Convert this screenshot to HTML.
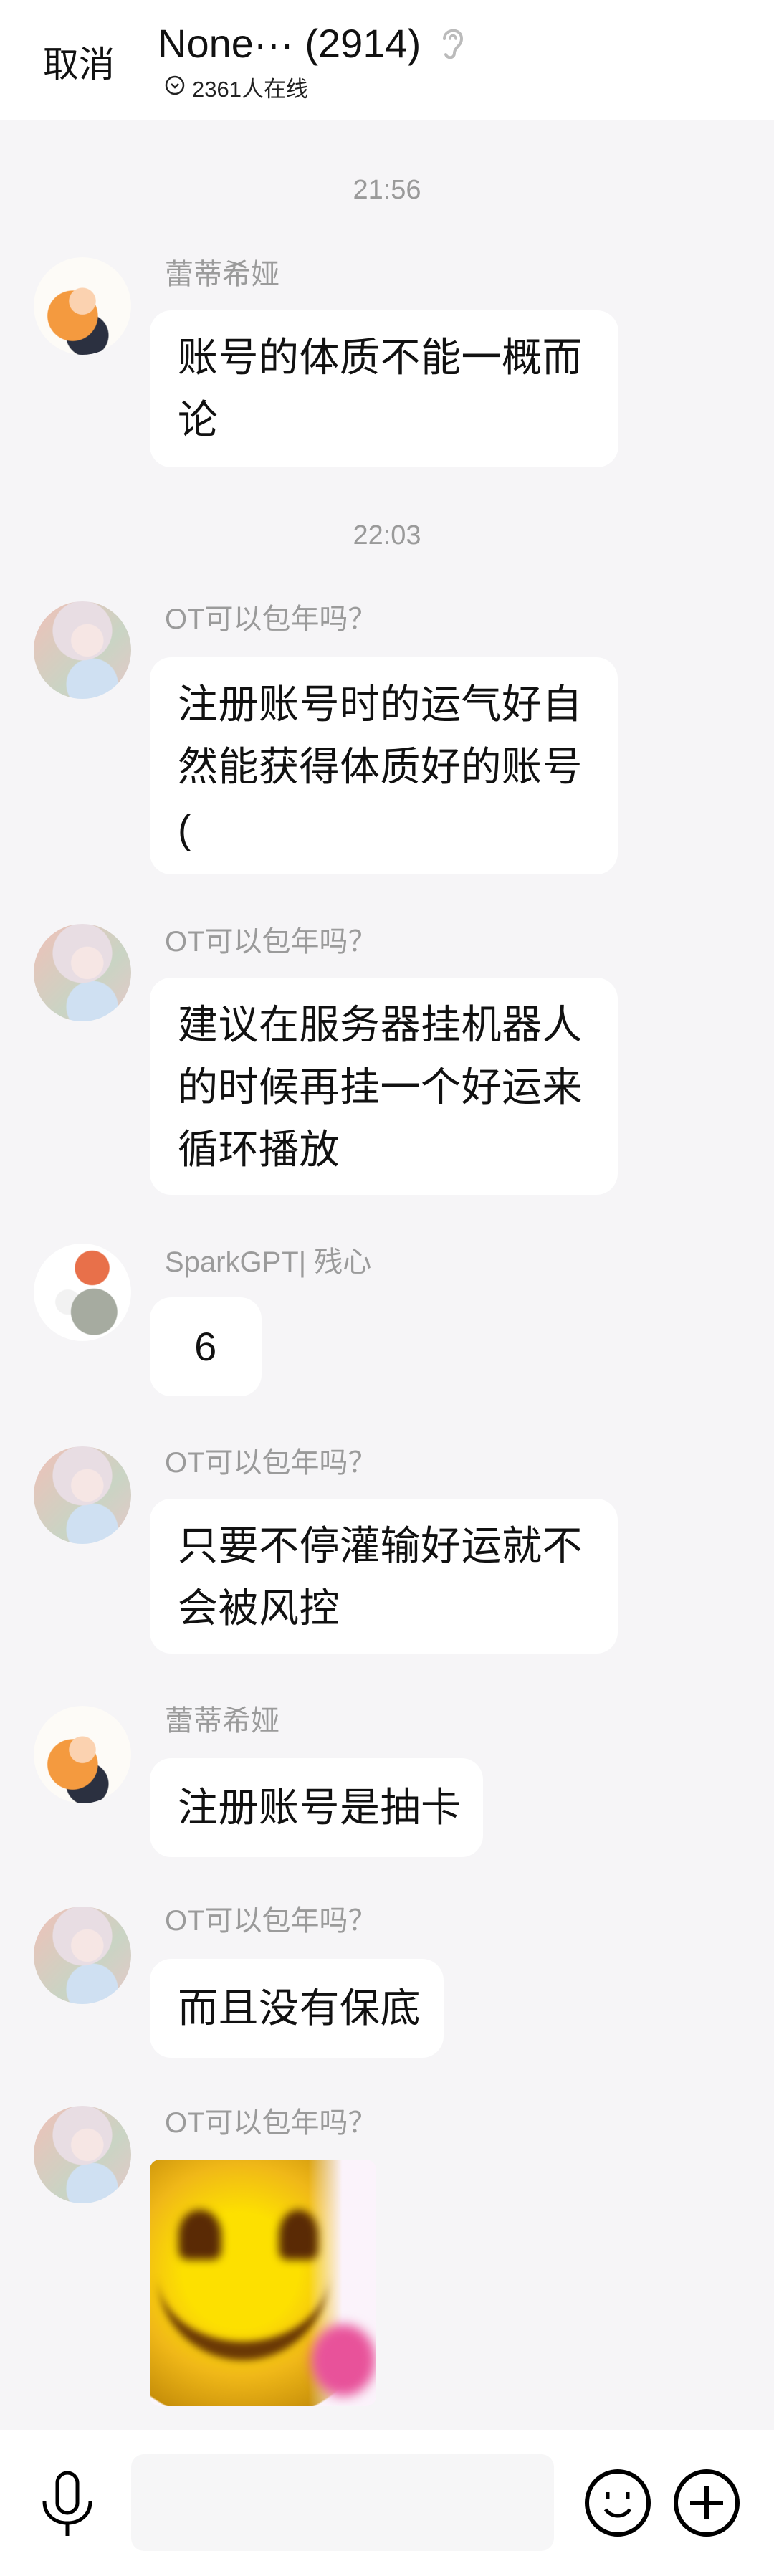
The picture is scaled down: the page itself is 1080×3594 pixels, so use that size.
<!DOCTYPE html>
<html><head><meta charset="utf-8"><style>
*{margin:0;padding:0;box-sizing:border-box}
body{width:1080px;height:3594px;background:#f6f5f7;position:relative;overflow:hidden;font-family:"Liberation Sans","Noto Sans CJK SC",sans-serif}
.a{position:absolute}
.hdr{left:0;top:0;width:1080px;height:168px;background:#fff}
.time{width:1080px;text-align:center;color:#9a9a9a;font-size:38px}
.av{left:47px;width:136px;height:136px;border-radius:50%;overflow:hidden}
.name{left:230px;color:#9b9b9b;font-size:40px;line-height:50px}
.bub{left:209px;background:#fff;border-radius:30px;padding:22px 0 0 39px;font-size:56px;line-height:87px;color:#111;letter-spacing:0.5px;white-space:nowrap}
.fox{background:radial-gradient(circle at 50% 45%,#fbd2b0 0 18%,transparent 19%),radial-gradient(circle at 40% 60%,#f49a3f 0 30%,transparent 31%),radial-gradient(circle at 55% 80%,#2b3040 0 22%,transparent 23%),#fdfbf7}
.girl{background:radial-gradient(circle at 55% 40%,#f6e6e4 0 20%,transparent 21%),radial-gradient(circle at 50% 30%,#e8dde3 0 35%,transparent 36%),radial-gradient(circle at 60% 85%,#cfe0f2 0 25%,transparent 26%),linear-gradient(135deg,#f0c0b8,#c9d4c4 60%,#e7c7c7)}
.boy{background:radial-gradient(circle at 60% 25%,#e8704a 0 18%,transparent 19%),radial-gradient(circle at 62% 70%,#a6aba0 0 25%,transparent 26%),radial-gradient(circle at 35% 60%,#f2f2f2 0 14%,transparent 15%),#fff}
</style></head><body>
<div class="a hdr"></div>
<div class="a" style="left:60px;top:50px;font-size:50px;color:#111">取消</div>
<div class="a" style="left:220px;top:28px;font-size:56px;color:#111;white-space:nowrap">None··· (2914)</div>
<svg class="a" style="left:606px;top:32px" width="50" height="54" viewBox="0 0 50 54"><path d="M14 22 C14 8 38 6 38 22 C38 32 28 34 28 42 C28 50 18 50 16 44" fill="none" stroke="#bbb" stroke-width="4" stroke-linecap="round"/><path d="M22 22 C22 16 30 16 30 22" fill="none" stroke="#bbb" stroke-width="3.5" stroke-linecap="round"/></svg>
<svg class="a" style="left:229px;top:104px" width="30" height="30" viewBox="0 0 30 30"><circle cx="15" cy="15" r="12" fill="none" stroke="#222" stroke-width="2.5"/><path d="M10 13 L15 18 L20 13" fill="none" stroke="#222" stroke-width="2.5"/></svg>
<div class="a" style="left:268px;top:99px;font-size:31px;color:#222">2361人在线</div>

<div class="a time" style="top:244px">21:56</div>
<div class="a av fox" style="top:359px"></div>
<div class="a name" style="top:358px">蕾蒂希娅</div>
<div class="a bub" style="top:433px;width:654px;height:219px">账号的体质不能一概而<br>论</div>

<div class="a time" style="top:726px">22:03</div>
<div class="a av girl" style="top:839px"></div>
<div class="a name" style="top:839px">OT可以包年吗？</div>
<div class="a bub" style="top:917px;width:653px;height:303px">注册账号时的运气好自<br>然能获得体质好的账号<br>(</div>

<div class="a av girl" style="top:1289px"></div>
<div class="a name" style="top:1289px">OT可以包年吗？</div>
<div class="a bub" style="top:1364px;width:653px;height:303px">建议在服务器挂机器人<br>的时候再挂一个好运来<br>循环播放</div>

<div class="a av boy" style="top:1735px"></div>
<div class="a name" style="top:1736px">SparkGPT| 残心</div>
<div class="a bub" style="top:1810px;width:156px;height:138px;padding:0;text-align:center;line-height:138px">6</div>

<div class="a av girl" style="top:2018px"></div>
<div class="a name" style="top:2016px">OT可以包年吗？</div>
<div class="a bub" style="top:2091px;width:653px;height:216px">只要不停灌输好运就不<br>会被风控</div>

<div class="a av fox" style="top:2380px"></div>
<div class="a name" style="top:2376px">蕾蒂希娅</div>
<div class="a bub" style="top:2453px;width:465px;height:138px;padding-top:25px">注册账号是抽卡</div>

<div class="a av girl" style="top:2660px"></div>
<div class="a name" style="top:2655px">OT可以包年吗？</div>
<div class="a bub" style="top:2733px;width:410px;height:138px;padding-top:25px">而且没有保底</div>

<div class="a av girl" style="top:2938px"></div>
<div class="a name" style="top:2937px">OT可以包年吗？</div>
<div class="a" style="left:209px;top:3013px;width:316px;height:344px;border-radius:14px;overflow:hidden;background:linear-gradient(90deg,transparent 70%,#fbf3fb 85%),radial-gradient(ellipse at 40% 45%,#fde000 0 30%,#f0b818 55%,#c8900a 80%,#fbf6fb 81%)">
 <div class="a" style="left:40px;top:70px;width:60px;height:70px;border-radius:50% 50% 20% 20%;background:#5a2a05;filter:blur(6px)"></div>
 <div class="a" style="left:180px;top:70px;width:55px;height:70px;border-radius:50% 50% 20% 20%;background:#5a2a05;filter:blur(6px)"></div>
 <div class="a" style="left:10px;top:110px;width:240px;height:170px;border-bottom:26px solid #6a3805;border-radius:0 0 120px 120px;filter:blur(5px)"></div>
 <div class="a" style="left:225px;top:230px;width:90px;height:100px;border-radius:50%;background:#e8529a;filter:blur(8px)"></div>
</div>

<div class="a" style="left:0;top:3390px;width:1080px;height:204px;background:#fff"></div>
<div class="a" style="left:183px;top:3424px;width:590px;height:135px;border-radius:18px;background:#f6f6f7"></div>
<svg class="a" style="left:56px;top:3446px" width="76" height="94" viewBox="0 0 76 94"><rect x="24" y="4" width="28" height="56" rx="14" fill="none" stroke="#000" stroke-width="5"/><path d="M6 44 C6 84 70 84 70 44" fill="none" stroke="#000" stroke-width="5"/><path d="M38 74 V92" stroke="#000" stroke-width="5"/></svg>
<svg class="a" style="left:815px;top:3445px" width="94" height="94" viewBox="0 0 94 94"><ellipse cx="47" cy="47" rx="43" ry="44" fill="none" stroke="#000" stroke-width="6"/><path d="M33 32 V42 M61 32 V42" stroke="#000" stroke-width="5"/><path d="M30 56 C38 68 56 68 64 56" fill="none" stroke="#000" stroke-width="5"/></svg>
<svg class="a" style="left:939px;top:3445px" width="94" height="94" viewBox="0 0 94 94"><ellipse cx="47" cy="47" rx="43" ry="44" fill="none" stroke="#000" stroke-width="6"/><path d="M47 24 V70 M24 47 H70" stroke="#000" stroke-width="6"/></svg>
</body></html>
